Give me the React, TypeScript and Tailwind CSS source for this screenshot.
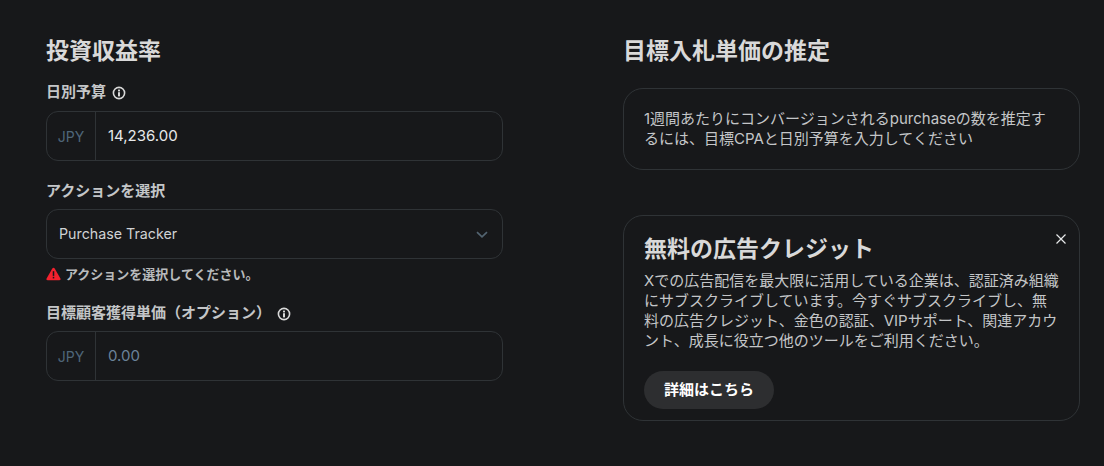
import React from "react";

const font = { fontFamily: '"Inter", "Noto Sans CJK JP", sans-serif' };

function Info() {
  return (
    <svg width="14" height="14" viewBox="0 0 14 14" fill="none" className="shrink-0 translate-y-px">
      <circle cx="7" cy="7" r="5.6" stroke="#d9d9d9" strokeWidth="1.6" />
      <rect x="6" y="3.6" width="2" height="1.8" fill="#d9d9d9" />
      <rect x="6" y="6.2" width="2" height="4.2" fill="#d9d9d9" />
    </svg>
  );
}

function MoneyInput({ value, muted }: { value: string; muted?: boolean }) {
  return (
    <div className="flex h-[50px] w-full items-stretch rounded-xl border border-[#2f3336]">
      <div className="flex w-[49px] shrink-0 items-center justify-center border-r border-[#2f3336] text-[14px] text-[#4f6679]">
        JPY
      </div>
      <div className={`flex items-center pl-3 text-[15px] ${muted ? "text-[#6b8299]" : "text-[#e7e9ea]"}`}>{value}</div>
    </div>
  );
}

export default function App() {
  return (
    <div style={font} className="flex h-[466px] w-[1104px] gap-[120px] overflow-hidden bg-[#17181a] pl-[46px] pr-6 pt-[37px]">
      <div className="flex w-[457px] shrink-0 flex-col">
        <h2 className="text-[23px] font-bold leading-[28px] text-[#d9d9d9]">投資収益率</h2>
        <div className="mt-[17px] flex h-5 items-center gap-[6px] text-[15px] font-bold leading-5 text-[#c4c6c8]">
          日別予算 <Info />
        </div>
        <div className="mt-[9px]">
          <MoneyInput value="14,236.00" />
        </div>
        <div className="mt-5 h-5 text-[15px] font-bold leading-5 text-[#c4c6c8]">アクションを選択</div>
        <div className="mt-2 flex h-[50px] items-center justify-between rounded-xl border border-[#2f3336] pb-px pl-3 pr-[14px] text-[14.25px] text-[#d0d2d4]">
          <span>Purchase Tracker</span>
          <svg width="12" height="8" viewBox="0 0 12 8" fill="none" className="translate-y-px">
            <path d="M1 1.2 6 5.8l5-4.6" stroke="#536471" strokeWidth="1.7" />
          </svg>
        </div>
        <div className="mt-[6px] flex h-[18px] items-center gap-1 text-[13px] font-bold leading-4 text-[#b9bbbd]">
          <svg width="15" height="14" viewBox="0 0 16 15" preserveAspectRatio="none" className="shrink-0">
            <path d="M8 .8c.5 0 .9.3 1.1.6l6.3 11c.5.9-.1 1.9-1.1 1.9H1.7c-1 0-1.6-1-1.1-1.9l6.3-11C7.1 1.1 7.5.8 8 .8z" fill="#f4212e" />
            <rect x="7.2" y="4.5" width="1.6" height="5" fill="#17181a" />
            <rect x="7.2" y="10.5" width="1.6" height="1.7" fill="#17181a" />
          </svg>
          アクションを選択してください。
        </div>
        <div className="mt-5 flex h-5 items-center gap-[6px] text-[15px] font-bold leading-5 text-[#c4c6c8]">
          目標顧客獲得単価（オプション） <Info />
        </div>
        <div className="mt-2">
          <MoneyInput value="0.00" muted />
        </div>
      </div>

      <div className="flex w-[457px] shrink-0 flex-col">
        <h2 className="text-[23px] font-bold leading-[28px] text-[#d9d9d9]">目標入札単価の推定</h2>
        <div className="mt-[23px] h-[82px] rounded-[20px] border border-[#2f3336] px-5 py-[20px] text-[15px] leading-[20px] text-[#c4c6c8]">
          1週間あたりにコンバージョンされるpurchaseの数を推定するには、目標CPAと日別予算を入力してください
        </div>
        <div className="relative mt-[45px] h-[206px] rounded-[20px] border border-[#2f3336] px-5 pt-[19px]">
          <svg width="12" height="12" viewBox="0 0 12 12" fill="none" className="absolute right-[12px] top-[17px]">
            <path d="M1.5 1.5l9 9M10.5 1.5l-9 9" stroke="#e7e9ea" strokeWidth="1.2" />
          </svg>
          <div className="text-[23px] font-bold leading-[28px] text-[#d9d9d9]">無料の広告クレジット</div>
          <p className="mt-2 text-[15px] leading-[20px] text-[#c4c6c8]">
            Xでの広告配信を最大限に活用している企業は、認証済み組織にサブスクライブしています。今すぐサブスクライブし、無料の広告クレジット、金色の認証、VIPサポート、関連アカウント、成長に役立つ他のツールをご利用ください。
          </p>
          <div className="mt-5 flex h-[38px] w-[130px] items-center justify-center rounded-full bg-[#2d2e30] text-[15px] font-bold text-white">
            詳細はこちら
          </div>
        </div>
      </div>
    </div>
  );
}
